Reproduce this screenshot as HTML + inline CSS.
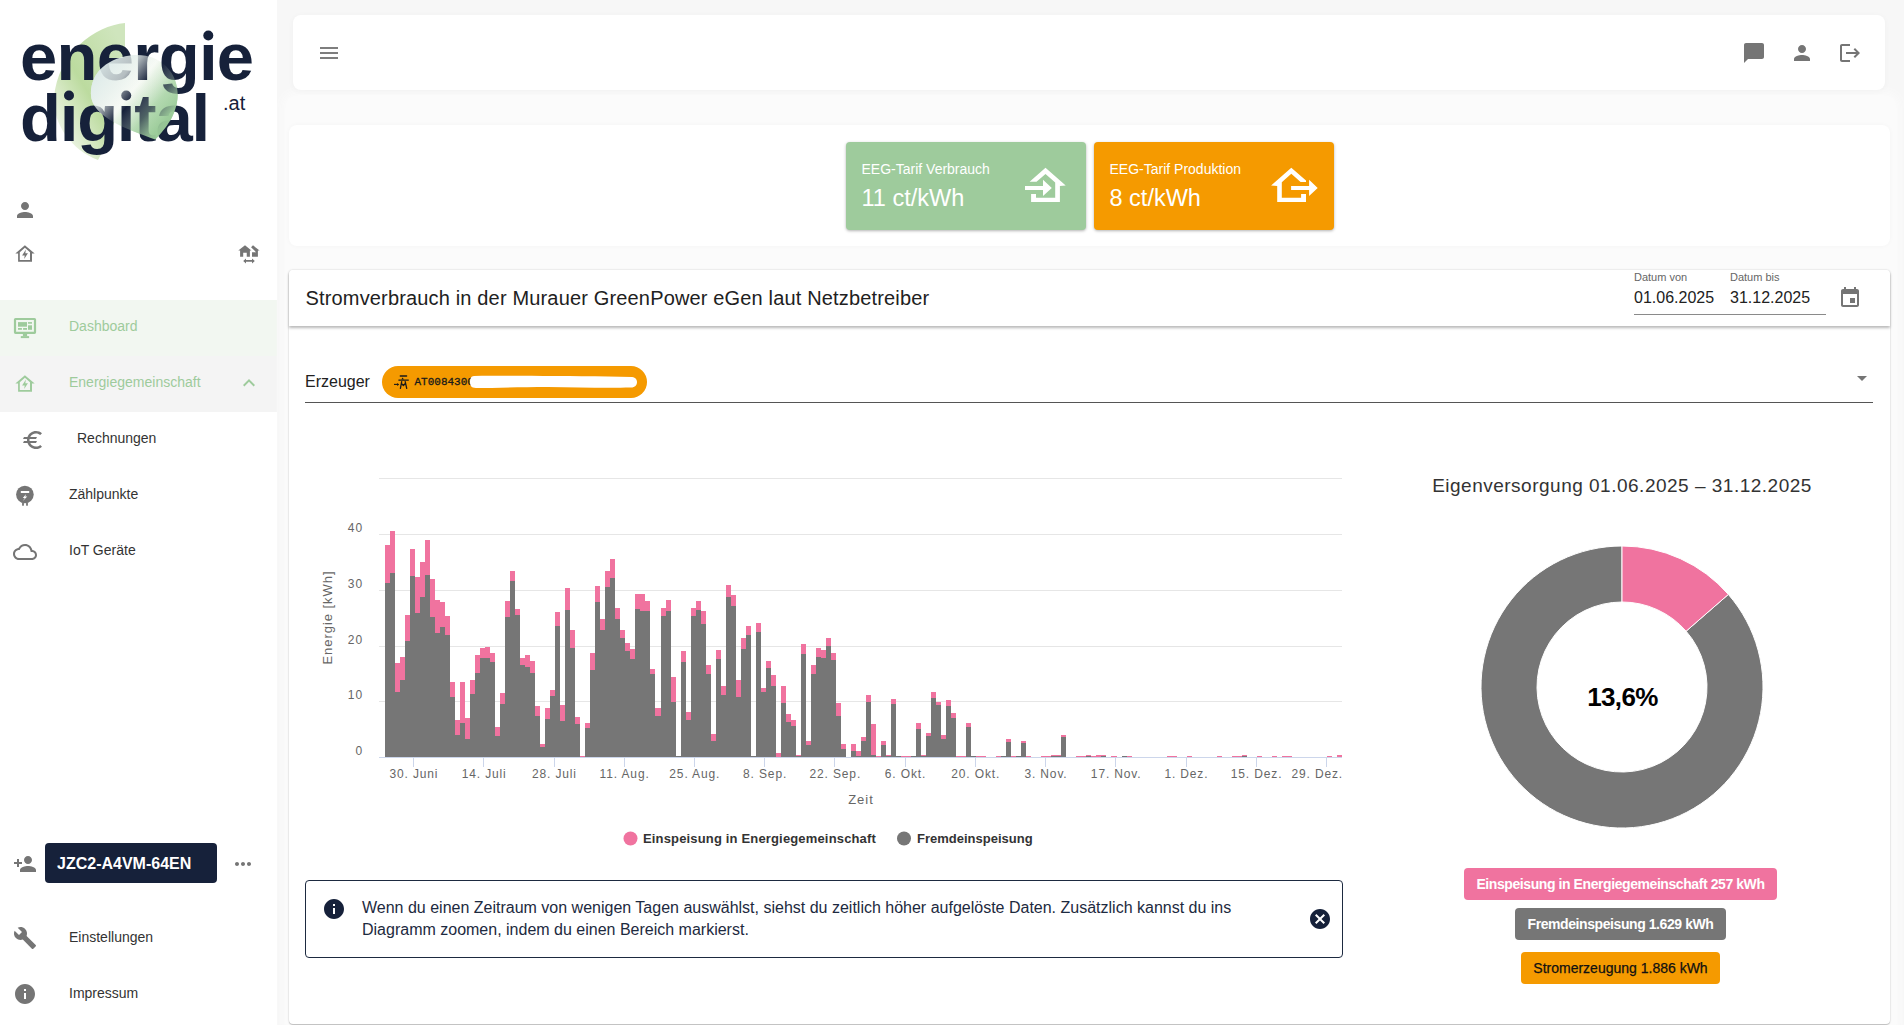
<!DOCTYPE html>
<html><head><meta charset="utf-8">
<style>
*{box-sizing:border-box;margin:0;padding:0}
html,body{width:1904px;height:1025px;overflow:hidden;background:#f7f7f7;font-family:"Liberation Sans",sans-serif;color:#212121}
.abs{position:absolute}
.t{position:absolute;white-space:nowrap;line-height:1}
#side{position:absolute;left:0;top:0;width:277px;height:1025px;background:#fff}
svg.i{position:absolute;fill:#757575}
.nt{position:absolute;font-size:14px;color:#333;white-space:nowrap;line-height:1}
#topbar{position:absolute;left:293px;top:15px;width:1592px;height:75px;background:#fff;border-radius:8px;box-shadow:0 1px 6px rgba(0,0,0,.035)}
#tarif{position:absolute;left:289px;top:125px;width:1601px;height:121px;background:#fff;border-radius:8px;box-shadow:0 0 5px rgba(0,0,0,.03)}
.tcard{position:absolute;top:142px;width:240px;height:88px;border-radius:4px;color:#fff;box-shadow:0 1px 3px rgba(0,0,0,.3)}
#card{position:absolute;left:289px;top:270px;width:1601px;height:754px;background:#fff;border-radius:4px;box-shadow:0 0 2px rgba(0,0,0,.18),0 1px 1px rgba(0,0,0,.2)}
#hdr{position:absolute;left:289px;top:270px;width:1601px;height:56px;background:#fff;border-radius:4px 4px 0 0;box-shadow:0 2px 3px rgba(0,0,0,.28)}
.badge{position:absolute;height:32px;border-radius:4px;font-size:14px;font-weight:bold;letter-spacing:-0.42px;color:#fff;white-space:nowrap;line-height:32px;text-align:center}
</style></head><body>
<div id="side">
  <svg class="abs" style="left:0;top:0" width="277" height="170">
    <defs>
      <linearGradient id="lg1" x1="0.2" y1="0.9" x2="0.9" y2="0.1"><stop offset="0" stop-color="#eef5e6"/><stop offset="0.45" stop-color="#bcdb9f"/><stop offset="1" stop-color="#cfe5bd"/></linearGradient>
      <linearGradient id="lg2a" x1="0" y1="0.1" x2="1" y2="0.9"><stop offset="0" stop-color="#d9e8e8"/><stop offset="0.45" stop-color="#f7faf5"/><stop offset="0.7" stop-color="#b3d9b0"/><stop offset="1" stop-color="#97c995"/></linearGradient>
      <linearGradient id="lg2b" x1="0" y1="0.1" x2="1" y2="0.9"><stop offset="0" stop-color="#d9e8e8" stop-opacity="1"/><stop offset="0.3" stop-color="#eaf2ee" stop-opacity="0.75"/><stop offset="0.5" stop-color="#f7faf5" stop-opacity="0"/><stop offset="0.68" stop-color="#b3d9b0" stop-opacity="0.35"/><stop offset="0.85" stop-color="#9ccc9a" stop-opacity="0.95"/><stop offset="1" stop-color="#97c995" stop-opacity="1"/></linearGradient>
    </defs>
    <path d="M125 23 C 95 26 58 52 54 98 C 53 125 72 150 98 160 C 110 140 118 110 125 85 Z" fill="url(#lg1)"/>
    <path d="M90.9 93.8 C 91 72 108 57 135 55 C 160 54 178 72 177.7 95 C 177 115 166 128 155.2 139.6 C 130 130 91 118 90.9 93.8 Z" fill="url(#lg2a)"/>
    <g fill="#16213a" font-family="Liberation Sans" font-weight="bold" font-size="67">
    <text x="20" y="80" letter-spacing="-0.7">energıe</text>
    <text x="20" y="140.5" letter-spacing="-1.2">dıgıtal</text>
    <circle cx="208.3" cy="35.5" r="5"/><circle cx="69.0" cy="95.5" r="5"/><circle cx="126.2" cy="95.5" r="5"/>
    </g>
    <path d="M90.9 93.8 C 91 72 108 57 135 55 C 160 54 178 72 177.7 95 C 177 115 166 128 155.2 139.6 C 130 130 91 118 90.9 93.8 Z" fill="url(#lg2b)"/>
    <text x="223" y="109.5" font-family="Liberation Sans" font-size="20" fill="#16213a">.at</text>
  </svg>
  <!-- person -->
  <svg class="i" style="left:13px;top:198px" width="24" height="24" viewBox="0 0 24 24"><path d="M12 12c2.21 0 4-1.79 4-4s-1.79-4-4-4-4 1.79-4 4 1.79 4 4 4zm0 2c-2.67 0-8 1.34-8 4v2h16v-2c0-2.66-5.33-4-8-4z"/></svg>
  <!-- home bolt outline -->
  <svg class="abs" style="left:13px;top:241px" width="24" height="24" viewBox="0 0 24 24"><path d="M2.35 12.6 L11.9 4.2 L21.7 12.6 H19 V20.8 H5.1 V12.6 Z M6.8 11.2 V19 H17 V11.2 L11.9 6.7 Z" fill="#757575" fill-rule="evenodd"/><path d="M12.9 8.6 L9.1 14.4 H11.7 L11.2 18 L14.9 12.2 H12.3 Z" fill="#757575"/></svg>
  <!-- swap homes -->
  <svg class="i" style="left:237px;top:243px" width="24" height="24" viewBox="0 0 24 24"><path d="M8 2.2 L1.3 7.6 H3.1 V13.7 H6.2 V9.8 H9.75 V13.7 H12.9 V7.6 H14.4 Z"/><path d="M14.05 4.3 L16 2.35 L22.6 7.6 H20.9 V13.7 H15 V9.2 H19.1 Z"/><path d="M6.2 17.9 L9 15.4 V17.1 H15 V15.4 L17.8 17.9 L15 20.4 V18.7 H9 V20.4 Z"/></svg>
  <!-- Dashboard row -->
  <div class="abs" style="left:0;top:300px;width:277px;height:56px;background:#f2f7f1"></div>
  <div class="abs" style="left:0;top:356px;width:277px;height:56px;background:#f4f4f4"></div>
  <svg class="abs" style="left:13px;top:316px" width="24" height="24" viewBox="0 0 24 24" fill="#9ecb9c"><path fill-rule="evenodd" d="M2.5 1.9 H21.5 Q23.1 1.9 23.1 3.5 V16.3 Q23.1 17.9 21.5 17.9 H2.5 Q0.9 17.9 0.9 16.3 V3.5 Q0.9 1.9 2.5 1.9 Z M3.1 4.1 V15.7 H20.9 V4.1 Z"/><rect x="5" y="6.1" width="9" height="4.6"/><rect x="15" y="6.1" width="4" height="1.6"/><rect x="15" y="9.3" width="4" height="4.5"/><rect x="5" y="12" width="3.9" height="1.8"/><rect x="10.1" y="12" width="3.9" height="1.8"/><rect x="9.9" y="17.5" width="4.2" height="2.8"/><rect x="7.8" y="20.1" width="8.3" height="2"/></svg>
  <div class="nt" style="left:69px;top:319px;color:#9ecb9c">Dashboard</div>
  <svg class="abs" style="left:13px;top:371px" width="24" height="24" viewBox="0 0 24 24"><path d="M2.35 12.6 L11.9 4.2 L21.7 12.6 H19 V20.8 H5.1 V12.6 Z M6.8 11.2 V19 H17 V11.2 L11.9 6.7 Z" fill="#9ecb9c" fill-rule="evenodd"/><path d="M12.9 8.6 L9.1 14.4 H11.7 L11.2 18 L14.9 12.2 H12.3 Z" fill="#9ecb9c"/></svg>
  <div class="nt" style="left:69px;top:375px;color:#9ecb9c">Energiegemeinschaft</div>
  <svg class="abs" style="left:237px;top:371px" width="24" height="24" viewBox="0 0 24 24"><path d="M12 8l-6 6 1.41 1.41L12 10.83l4.59 4.58L18 14z" fill="#9ecb9c"/></svg>
  <svg class="i" style="left:21px;top:428px" width="24" height="24" viewBox="0 0 24 24"><path d="M15 18.5c-2.51 0-4.68-1.42-5.76-3.5H15l1-2H8.58c-.05-.33-.08-.66-.08-1s.03-.67.08-1H15l1-2H9.24C10.32 6.92 12.5 5.5 15 5.5c1.61 0 3.09.59 4.23 1.57L21 5.3C19.41 3.87 17.3 3 15 3c-3.92 0-7.24 2.51-8.48 6H3l-1 2h4.06c-.04.33-.06.66-.06 1s.02.67.06 1H3l-1 2h4.52c1.24 3.49 4.56 6 8.48 6 2.31 0 4.41-.87 6-2.3l-1.78-1.77c-1.13.98-2.6 1.57-4.22 1.57z"/></svg>
  <div class="nt" style="left:77px;top:431px">Rechnungen</div>
  <svg class="abs" style="left:13px;top:484px" width="24" height="24" viewBox="0 0 24 24"><circle cx="11.9" cy="10.5" r="8.8" fill="#757575"/><rect x="7.8" y="7" width="8.4" height="2" fill="#fff"/><path d="M13.2 10 L9.8 14 H11.8 L9.8 17 L14.3 12.6 H12.2 Z" fill="#fff"/><rect x="9.1" y="18.5" width="1.8" height="3.2" fill="#757575"/><rect x="13.1" y="18.5" width="1.8" height="3.2" fill="#757575"/></svg>
  <div class="nt" style="left:69px;top:487px">Zählpunkte</div>
  <svg class="i" style="left:13px;top:540px" width="24" height="24" viewBox="0 0 24 24"><path d="M19.35 10.04C18.67 6.59 15.64 4 12 4 9.11 4 6.6 5.64 5.35 8.04 2.34 8.36 0 10.91 0 14c0 3.31 2.69 6 6 6h13c2.76 0 5-2.24 5-5 0-2.64-2.05-4.78-4.65-4.96zM19 18H6c-2.21 0-4-1.79-4-4 0-2.05 1.53-3.76 3.56-3.97l1.07-.11.5-.95C8.08 7.14 9.94 6 12 6c2.62 0 4.88 1.86 5.39 4.43l.3 1.5 1.53.11c1.56.1 2.78 1.41 2.78 2.96 0 1.65-1.35 3-3 3z"/></svg>
  <div class="nt" style="left:69px;top:543px">IoT Geräte</div>
  <!-- bottom -->
  <svg class="i" style="left:13px;top:852px" width="24" height="24" viewBox="0 0 24 24"><path d="M15 12c2.21 0 4-1.79 4-4s-1.79-4-4-4-4 1.79-4 4 1.79 4 4 4zm-9-2V7H4v3H1v2h3v3h2v-3h3v-2H6zm9 4c-2.67 0-8 1.34-8 4v2h16v-2c0-2.66-5.33-4-8-4z"/></svg>
  <div class="abs" style="left:45px;top:843px;width:172px;height:40px;background:#16213a;border-radius:4px"></div>
  <div class="t" style="left:57px;top:856px;font-size:16px;font-weight:bold;color:#fff">JZC2-A4VM-64EN</div>
  <svg class="i" style="left:231px;top:852px" width="24" height="24" viewBox="0 0 24 24"><path d="M6 10c-1.1 0-2 .9-2 2s.9 2 2 2 2-.9 2-2-.9-2-2-2zm12 0c-1.1 0-2 .9-2 2s.9 2 2 2 2-.9 2-2-.9-2-2-2zm-6 0c-1.1 0-2 .9-2 2s.9 2 2 2 2-.9 2-2-.9-2-2-2z"/></svg>
  <svg class="i" style="left:12.5px;top:925.5px" width="24" height="24" viewBox="0 0 24 24"><path d="M22.7 19l-9.1-9.1c.9-2.3.4-5-1.5-6.9-2-2-5-2.4-7.4-1.3L9 6 6 9 1.6 4.7C.4 7.1.9 10.1 2.9 12.1c1.9 1.9 4.6 2.4 6.9 1.5l9.1 9.1c.4.4 1 .4 1.4 0l2.3-2.3c.5-.4.5-1.1.1-1.4z"/></svg>
  <div class="nt" style="left:69px;top:930px">Einstellungen</div>
  <svg class="i" style="left:13px;top:982px" width="24" height="24" viewBox="0 0 24 24"><path d="M12 2C6.48 2 2 6.48 2 12s4.48 10 10 10 10-4.48 10-10S17.52 2 12 2zm1 15h-2v-6h2v6zm0-8h-2V7h2v2z"/></svg>
  <div class="nt" style="left:69px;top:986px">Impressum</div>
</div>

<div class="abs" style="left:286px;top:96px;width:1610px;height:940px;background:#fbfbfb;border-radius:10px;box-shadow:0 0 8px 4px #fbfbfb"></div>
<div id="topbar"></div>
<svg class="abs" style="left:317px;top:41px" width="24" height="24" viewBox="0 0 24 24" fill="#5f5f5f"><rect x="3" y="6.2" width="18" height="1.6"/><rect x="3" y="11.2" width="18" height="1.6"/><rect x="3" y="16.2" width="18" height="1.6"/></svg>
<svg class="i" style="left:1742px;top:41px" width="24" height="24" viewBox="0 0 24 24"><path d="M20 2H4c-1.1 0-2 .9-2 2v18l4-4h14c1.1 0 2-.9 2-2V4c0-1.1-.9-2-2-2z"/></svg>
<svg class="i" style="left:1790px;top:41px" width="24" height="24" viewBox="0 0 24 24"><path d="M12 12c2.21 0 4-1.79 4-4s-1.79-4-4-4-4 1.79-4 4 1.79 4 4 4zm0 2c-2.67 0-8 1.34-8 4v2h16v-2c0-2.66-5.33-4-8-4z"/></svg>
<svg class="i" style="left:1838px;top:41px" width="24" height="24" viewBox="0 0 24 24"><path d="M17 7l-1.41 1.41L18.17 11H8v2h10.17l-2.58 2.58L17 17l5-5zM4 5h8V3H4c-1.1 0-2 .9-2 2v14c0 1.1.9 2 2 2h8v-2H4V5z"/></svg>

<div id="tarif"></div>
<div class="tcard" style="left:846px;background:#9ecb9c">
  <div class="t" style="left:15.5px;top:20px;font-size:14px">EEG-Tarif Verbrauch</div>
  <div class="t" style="left:15.5px;top:45px;font-size:23.5px">11 ct/kWh</div>
  <svg class="abs" style="left:0;top:0" width="239" height="88" viewBox="0 0 239 88"><path fill="#fff" d="M183.6 39.7 L199.5 25.8 L219.7 43.6 L213.9 44.1 V60 H185.1 V51.9 H190 V55.8 H209.2 V40.4 L199.5 31.9 L190.5 39.7 Z"/><path fill="#fff" d="M179 44.1 H197 V37.8 L205.8 45.9 L197 54.1 V48 H179 Z"/></svg>
</div>
<div class="tcard" style="left:1094px;background:#f59a00">
  <div class="t" style="left:15.5px;top:20px;font-size:14px">EEG-Tarif Produktion</div>
  <div class="t" style="left:15.5px;top:45px;font-size:23.5px">8 ct/kWh</div>
  <svg class="abs" style="left:0;top:0" width="239" height="88" viewBox="0 0 239 88"><path fill="#fff" d="M177.1 43.4 L197.3 25.8 L212 38.5 V40 H206.6 L197.3 31.7 L187.8 40.2 V55.8 H207.1 V51.9 H212 V60 H183.2 V44.1 Z"/><path fill="#fff" d="M197.1 44.1 H215.1 V37.8 L223.7 45.9 L215.1 54.1 V48 H197.1 Z"/></svg>
</div>

<div id="card"></div>
<div id="hdr">
  <div class="t" style="left:16.5px;top:18px;font-size:20px;color:#212121;letter-spacing:0.16px">Stromverbrauch in der Murauer GreenPower eGen laut Netzbetreiber</div>
  <div class="t" style="left:1345px;top:2px;font-size:11px;color:#666">Datum von</div>
  <div class="t" style="left:1441px;top:2px;font-size:11px;color:#666">Datum bis</div>
  <div class="t" style="left:1345px;top:20px;font-size:16px;color:#212121">01.06.2025</div>
  <div class="t" style="left:1441px;top:20px;font-size:16px;color:#212121">31.12.2025</div>
  <div class="abs" style="left:1345px;top:44px;width:192px;height:1px;background:#8a8a8a"></div>
  <svg class="i" style="left:1549px;top:16px" width="24" height="24" viewBox="0 0 24 24"><path d="M17 12h-5v5h5v-5zM16 1v2H8V1H6v2H5c-1.11 0-1.99.9-1.99 2L3 19c0 1.1.89 2 2 2h14c1.1 0 2-.9 2-2V5c0-1.1-.9-2-2-2h-1V1h-2zm3 18H5V8h14v11z"/></svg>
</div>

<!-- Erzeuger select -->
<div class="t" style="left:305px;top:374px;font-size:16px;color:#212121">Erzeuger</div>
<div class="abs" style="left:382px;top:366px;width:265px;height:32px;border-radius:16px;background:#f59a00"></div>
<svg class="abs" style="left:393px;top:374px" width="17" height="16" viewBox="0 0 17 16"><path d="M7.3 2 H13.6 M5.9 6.1 H15.3" stroke="#1a1a1a" stroke-width="1.4" stroke-linecap="round" fill="none"/><path d="M9.6 3.5 L10.9 5.5 H8.3 Z" fill="#1a1a1a"/><path d="M8.7 7.6 L7.4 14.3 M12.2 7.6 L13.7 14.3 M8.4 9.5 L10.4 11.5 M12.3 9.5 L10.4 11.5" stroke="#1a1a1a" stroke-width="1.3" stroke-linecap="round" fill="none"/><path d="M1 10.4 H5" stroke="#1a1a1a" stroke-width="1.1"/><path d="M4.2 8.9 L6.2 10.4 L4.2 11.9 Z" fill="#1a1a1a"/></svg>
<div class="t" style="left:414.5px;top:377px;font-family:'Liberation Mono',monospace;font-size:11px;-webkit-text-stroke:0.3px #1a1a1a;color:#1a1a1a">AT0084300</div>
<svg class="abs" style="left:468px;top:372px" width="172" height="20" viewBox="0 0 172 20"><path d="M6 4 C 40 3.5 90 4 140 4.5 L164 5 C 168 5.5 169 8 169 10 C 169 13 167 15.5 163 15.5 C 140 16 110 15.5 80 15 C 50 15 25 16 8 16 C 3 16 2 13 2 10 C 2 7 3 4 6 4 Z" fill="#fff"/></svg>
<div class="abs" style="left:305px;top:402px;width:1568px;height:1px;background:#555"></div>
<svg class="i" style="left:1850px;top:366px" width="24" height="24" viewBox="0 0 24 24"><path d="M7 10l5 5 5-5z"/></svg>

<svg class="abs" style="left:0;top:0" width="1904" height="1025" font-family="Liberation Sans">
<path d="M379 757.5 H1342" stroke="#e6e6e6" stroke-width="1"/>
<path d="M379 701.5 H1342" stroke="#e6e6e6" stroke-width="1"/>
<path d="M379 646.5 H1342" stroke="#e6e6e6" stroke-width="1"/>
<path d="M379 590.5 H1342" stroke="#e6e6e6" stroke-width="1"/>
<path d="M379 534.5 H1342" stroke="#e6e6e6" stroke-width="1"/>
<path d="M379 478.5 H1342" stroke="#e6e6e6" stroke-width="1"/>
<rect x="385" y="583" width="5" height="174" fill="#767676"/>
<rect x="385" y="545" width="5" height="38" fill="#f0739f"/>
<rect x="390" y="573" width="5" height="184" fill="#767676"/>
<rect x="390" y="531" width="5" height="42" fill="#f0739f"/>
<rect x="395" y="692" width="5" height="65" fill="#767676"/>
<rect x="395" y="663" width="5" height="29" fill="#f0739f"/>
<rect x="400" y="680" width="5" height="77" fill="#767676"/>
<rect x="400" y="657" width="5" height="23" fill="#f0739f"/>
<rect x="405" y="641" width="5" height="116" fill="#767676"/>
<rect x="405" y="615" width="5" height="26" fill="#f0739f"/>
<rect x="410" y="576" width="5" height="181" fill="#767676"/>
<rect x="410" y="549" width="5" height="27" fill="#f0739f"/>
<rect x="415" y="613" width="5" height="144" fill="#767676"/>
<rect x="415" y="577" width="5" height="36" fill="#f0739f"/>
<rect x="420" y="597" width="5" height="160" fill="#767676"/>
<rect x="420" y="562" width="5" height="35" fill="#f0739f"/>
<rect x="425" y="575" width="5" height="182" fill="#767676"/>
<rect x="425" y="540" width="5" height="35" fill="#f0739f"/>
<rect x="430" y="617" width="5" height="140" fill="#767676"/>
<rect x="430" y="579" width="5" height="38" fill="#f0739f"/>
<rect x="435" y="633" width="5" height="124" fill="#767676"/>
<rect x="435" y="600" width="5" height="33" fill="#f0739f"/>
<rect x="440" y="627" width="5" height="130" fill="#767676"/>
<rect x="440" y="602" width="5" height="25" fill="#f0739f"/>
<rect x="445" y="635" width="5" height="122" fill="#767676"/>
<rect x="445" y="616" width="5" height="19" fill="#f0739f"/>
<rect x="450" y="697" width="5" height="60" fill="#767676"/>
<rect x="450" y="682" width="5" height="15" fill="#f0739f"/>
<rect x="455" y="735" width="5" height="22" fill="#767676"/>
<rect x="455" y="720" width="5" height="15" fill="#f0739f"/>
<rect x="460" y="723" width="5" height="34" fill="#767676"/>
<rect x="460" y="682" width="5" height="41" fill="#f0739f"/>
<rect x="465" y="739" width="5" height="18" fill="#767676"/>
<rect x="465" y="718" width="5" height="21" fill="#f0739f"/>
<rect x="470" y="694" width="5" height="63" fill="#767676"/>
<rect x="470" y="680" width="5" height="14" fill="#f0739f"/>
<rect x="475" y="673" width="5" height="84" fill="#767676"/>
<rect x="475" y="655" width="5" height="18" fill="#f0739f"/>
<rect x="480" y="658" width="5" height="99" fill="#767676"/>
<rect x="480" y="648" width="5" height="10" fill="#f0739f"/>
<rect x="485" y="658" width="5" height="99" fill="#767676"/>
<rect x="485" y="647" width="5" height="11" fill="#f0739f"/>
<rect x="490" y="662" width="5" height="95" fill="#767676"/>
<rect x="490" y="653" width="5" height="9" fill="#f0739f"/>
<rect x="495" y="736" width="5" height="21" fill="#767676"/>
<rect x="495" y="727" width="5" height="9" fill="#f0739f"/>
<rect x="500" y="704" width="5" height="53" fill="#767676"/>
<rect x="500" y="693" width="5" height="11" fill="#f0739f"/>
<rect x="505" y="617" width="5" height="140" fill="#767676"/>
<rect x="505" y="601" width="5" height="16" fill="#f0739f"/>
<rect x="510" y="581" width="5" height="176" fill="#767676"/>
<rect x="510" y="571" width="5" height="10" fill="#f0739f"/>
<rect x="515" y="615" width="5" height="142" fill="#767676"/>
<rect x="515" y="609" width="5" height="6" fill="#f0739f"/>
<rect x="520" y="665" width="5" height="92" fill="#767676"/>
<rect x="520" y="658" width="5" height="7" fill="#f0739f"/>
<rect x="525" y="667" width="5" height="90" fill="#767676"/>
<rect x="525" y="655" width="5" height="12" fill="#f0739f"/>
<rect x="530" y="673" width="5" height="84" fill="#767676"/>
<rect x="530" y="661" width="5" height="12" fill="#f0739f"/>
<rect x="535" y="716" width="5" height="41" fill="#767676"/>
<rect x="535" y="706" width="5" height="10" fill="#f0739f"/>
<rect x="540" y="747" width="5" height="10" fill="#767676"/>
<rect x="540" y="744" width="5" height="3" fill="#f0739f"/>
<rect x="545" y="719" width="5" height="38" fill="#767676"/>
<rect x="545" y="708" width="5" height="11" fill="#f0739f"/>
<rect x="550" y="696" width="5" height="61" fill="#767676"/>
<rect x="550" y="690" width="5" height="6" fill="#f0739f"/>
<rect x="555" y="626" width="5" height="131" fill="#767676"/>
<rect x="555" y="612" width="5" height="14" fill="#f0739f"/>
<rect x="560" y="721" width="5" height="36" fill="#767676"/>
<rect x="560" y="705" width="5" height="16" fill="#f0739f"/>
<rect x="565" y="610" width="5" height="147" fill="#767676"/>
<rect x="565" y="588" width="5" height="22" fill="#f0739f"/>
<rect x="570" y="648" width="5" height="109" fill="#767676"/>
<rect x="570" y="630" width="5" height="18" fill="#f0739f"/>
<rect x="575" y="724" width="5" height="33" fill="#767676"/>
<rect x="575" y="717" width="5" height="7" fill="#f0739f"/>
<rect x="580" y="756" width="5" height="1" fill="#f0739f"/>
<rect x="585" y="728" width="5" height="29" fill="#767676"/>
<rect x="585" y="723" width="5" height="5" fill="#f0739f"/>
<rect x="590" y="670" width="5" height="87" fill="#767676"/>
<rect x="590" y="653" width="5" height="17" fill="#f0739f"/>
<rect x="595" y="602" width="5" height="155" fill="#767676"/>
<rect x="595" y="586" width="5" height="16" fill="#f0739f"/>
<rect x="600" y="630" width="5" height="127" fill="#767676"/>
<rect x="600" y="619" width="5" height="11" fill="#f0739f"/>
<rect x="605" y="587" width="5" height="170" fill="#767676"/>
<rect x="605" y="571" width="5" height="16" fill="#f0739f"/>
<rect x="610" y="578" width="5" height="179" fill="#767676"/>
<rect x="610" y="559" width="5" height="19" fill="#f0739f"/>
<rect x="615" y="619" width="5" height="138" fill="#767676"/>
<rect x="615" y="608" width="5" height="11" fill="#f0739f"/>
<rect x="620" y="638" width="5" height="119" fill="#767676"/>
<rect x="620" y="630" width="5" height="8" fill="#f0739f"/>
<rect x="625" y="651" width="5" height="106" fill="#767676"/>
<rect x="625" y="643" width="5" height="8" fill="#f0739f"/>
<rect x="630" y="659" width="5" height="98" fill="#767676"/>
<rect x="630" y="649" width="5" height="10" fill="#f0739f"/>
<rect x="635" y="609" width="5" height="148" fill="#767676"/>
<rect x="635" y="594" width="5" height="15" fill="#f0739f"/>
<rect x="640" y="611" width="5" height="146" fill="#767676"/>
<rect x="640" y="594" width="5" height="17" fill="#f0739f"/>
<rect x="645" y="611" width="5" height="146" fill="#767676"/>
<rect x="645" y="601" width="5" height="10" fill="#f0739f"/>
<rect x="650" y="674" width="5" height="83" fill="#767676"/>
<rect x="650" y="669" width="5" height="5" fill="#f0739f"/>
<rect x="655" y="716" width="6" height="41" fill="#767676"/>
<rect x="655" y="708" width="6" height="8" fill="#f0739f"/>
<rect x="661" y="616" width="5" height="141" fill="#767676"/>
<rect x="661" y="608" width="5" height="8" fill="#f0739f"/>
<rect x="666" y="611" width="5" height="146" fill="#767676"/>
<rect x="666" y="600" width="5" height="11" fill="#f0739f"/>
<rect x="671" y="702" width="5" height="55" fill="#767676"/>
<rect x="671" y="677" width="5" height="25" fill="#f0739f"/>
<rect x="676" y="756" width="5" height="1" fill="#767676"/>
<rect x="681" y="662" width="5" height="95" fill="#767676"/>
<rect x="681" y="651" width="5" height="11" fill="#f0739f"/>
<rect x="686" y="720" width="5" height="37" fill="#767676"/>
<rect x="686" y="712" width="5" height="8" fill="#f0739f"/>
<rect x="691" y="616" width="5" height="141" fill="#767676"/>
<rect x="691" y="608" width="5" height="8" fill="#f0739f"/>
<rect x="696" y="610" width="5" height="147" fill="#767676"/>
<rect x="696" y="601" width="5" height="9" fill="#f0739f"/>
<rect x="701" y="624" width="5" height="133" fill="#767676"/>
<rect x="701" y="611" width="5" height="13" fill="#f0739f"/>
<rect x="706" y="674" width="5" height="83" fill="#767676"/>
<rect x="706" y="665" width="5" height="9" fill="#f0739f"/>
<rect x="711" y="741" width="5" height="16" fill="#767676"/>
<rect x="711" y="734" width="5" height="7" fill="#f0739f"/>
<rect x="716" y="659" width="5" height="98" fill="#767676"/>
<rect x="716" y="650" width="5" height="9" fill="#f0739f"/>
<rect x="721" y="695" width="5" height="62" fill="#767676"/>
<rect x="721" y="686" width="5" height="9" fill="#f0739f"/>
<rect x="726" y="597" width="5" height="160" fill="#767676"/>
<rect x="726" y="585" width="5" height="12" fill="#f0739f"/>
<rect x="731" y="606" width="5" height="151" fill="#767676"/>
<rect x="731" y="595" width="5" height="11" fill="#f0739f"/>
<rect x="736" y="697" width="5" height="60" fill="#767676"/>
<rect x="736" y="680" width="5" height="17" fill="#f0739f"/>
<rect x="741" y="649" width="5" height="108" fill="#767676"/>
<rect x="741" y="638" width="5" height="11" fill="#f0739f"/>
<rect x="746" y="635" width="5" height="122" fill="#767676"/>
<rect x="746" y="626" width="5" height="9" fill="#f0739f"/>
<rect x="751" y="756" width="5" height="1" fill="#767676"/>
<rect x="756" y="632" width="5" height="125" fill="#767676"/>
<rect x="756" y="623" width="5" height="9" fill="#f0739f"/>
<rect x="761" y="692" width="5" height="65" fill="#767676"/>
<rect x="761" y="688" width="5" height="4" fill="#f0739f"/>
<rect x="766" y="668" width="5" height="89" fill="#767676"/>
<rect x="766" y="661" width="5" height="7" fill="#f0739f"/>
<rect x="771" y="686" width="5" height="71" fill="#767676"/>
<rect x="771" y="675" width="5" height="11" fill="#f0739f"/>
<rect x="776" y="753" width="5" height="4" fill="#f0739f"/>
<rect x="781" y="703" width="5" height="54" fill="#767676"/>
<rect x="781" y="686" width="5" height="17" fill="#f0739f"/>
<rect x="786" y="722" width="5" height="35" fill="#767676"/>
<rect x="786" y="714" width="5" height="8" fill="#f0739f"/>
<rect x="791" y="726" width="5" height="31" fill="#767676"/>
<rect x="791" y="720" width="5" height="6" fill="#f0739f"/>
<rect x="796" y="756" width="5" height="1" fill="#767676"/>
<rect x="796" y="755" width="5" height="1" fill="#f0739f"/>
<rect x="801" y="654" width="5" height="103" fill="#767676"/>
<rect x="801" y="644" width="5" height="10" fill="#f0739f"/>
<rect x="806" y="745" width="5" height="12" fill="#767676"/>
<rect x="806" y="741" width="5" height="4" fill="#f0739f"/>
<rect x="811" y="674" width="5" height="83" fill="#767676"/>
<rect x="811" y="665" width="5" height="9" fill="#f0739f"/>
<rect x="816" y="657" width="5" height="100" fill="#767676"/>
<rect x="816" y="648" width="5" height="9" fill="#f0739f"/>
<rect x="821" y="658" width="5" height="99" fill="#767676"/>
<rect x="821" y="650" width="5" height="8" fill="#f0739f"/>
<rect x="826" y="646" width="5" height="111" fill="#767676"/>
<rect x="826" y="638" width="5" height="8" fill="#f0739f"/>
<rect x="831" y="660" width="5" height="97" fill="#767676"/>
<rect x="831" y="653" width="5" height="7" fill="#f0739f"/>
<rect x="836" y="716" width="5" height="41" fill="#767676"/>
<rect x="836" y="703" width="5" height="13" fill="#f0739f"/>
<rect x="841" y="749" width="5" height="8" fill="#767676"/>
<rect x="841" y="744" width="5" height="5" fill="#f0739f"/>
<rect x="851" y="751" width="5" height="6" fill="#767676"/>
<rect x="851" y="744" width="5" height="7" fill="#f0739f"/>
<rect x="856" y="756" width="5" height="1" fill="#767676"/>
<rect x="856" y="751" width="5" height="5" fill="#f0739f"/>
<rect x="861" y="741" width="5" height="16" fill="#767676"/>
<rect x="861" y="737" width="5" height="4" fill="#f0739f"/>
<rect x="866" y="702" width="5" height="55" fill="#767676"/>
<rect x="866" y="695" width="5" height="7" fill="#f0739f"/>
<rect x="871" y="755" width="5" height="2" fill="#767676"/>
<rect x="871" y="724" width="5" height="31" fill="#f0739f"/>
<rect x="876" y="756" width="5" height="1" fill="#f0739f"/>
<rect x="881" y="745" width="5" height="12" fill="#767676"/>
<rect x="881" y="741" width="5" height="4" fill="#f0739f"/>
<rect x="886" y="756" width="5" height="1" fill="#767676"/>
<rect x="886" y="755" width="5" height="1" fill="#f0739f"/>
<rect x="891" y="704" width="5" height="53" fill="#767676"/>
<rect x="891" y="699" width="5" height="5" fill="#f0739f"/>
<rect x="896" y="756" width="5" height="1" fill="#767676"/>
<rect x="901" y="756" width="5" height="1" fill="#f0739f"/>
<rect x="906" y="756" width="5" height="1" fill="#f0739f"/>
<rect x="911" y="756" width="5" height="1" fill="#767676"/>
<rect x="916" y="729" width="5" height="28" fill="#767676"/>
<rect x="916" y="723" width="5" height="6" fill="#f0739f"/>
<rect x="921" y="756" width="5" height="1" fill="#767676"/>
<rect x="921" y="755" width="5" height="1" fill="#f0739f"/>
<rect x="926" y="736" width="5" height="21" fill="#767676"/>
<rect x="926" y="733" width="5" height="3" fill="#f0739f"/>
<rect x="931" y="698" width="5" height="59" fill="#767676"/>
<rect x="931" y="692" width="5" height="6" fill="#f0739f"/>
<rect x="936" y="705" width="5" height="52" fill="#767676"/>
<rect x="936" y="702" width="5" height="3" fill="#f0739f"/>
<rect x="941" y="739" width="5" height="18" fill="#767676"/>
<rect x="941" y="735" width="5" height="4" fill="#f0739f"/>
<rect x="946" y="706" width="5" height="51" fill="#767676"/>
<rect x="946" y="700" width="5" height="6" fill="#f0739f"/>
<rect x="951" y="718" width="5" height="39" fill="#767676"/>
<rect x="951" y="713" width="5" height="5" fill="#f0739f"/>
<rect x="956" y="756" width="5" height="1" fill="#f0739f"/>
<rect x="961" y="756" width="5" height="1" fill="#f0739f"/>
<rect x="966" y="727" width="5" height="30" fill="#767676"/>
<rect x="966" y="723" width="5" height="4" fill="#f0739f"/>
<rect x="971" y="756" width="5" height="1" fill="#767676"/>
<rect x="976" y="756" width="5" height="1" fill="#f0739f"/>
<rect x="981" y="756" width="5" height="1" fill="#f0739f"/>
<rect x="996" y="756" width="5" height="1" fill="#f0739f"/>
<rect x="1001" y="756" width="5" height="1" fill="#767676"/>
<rect x="1006" y="742" width="5" height="15" fill="#767676"/>
<rect x="1006" y="739" width="5" height="3" fill="#f0739f"/>
<rect x="1011" y="756" width="5" height="1" fill="#f0739f"/>
<rect x="1016" y="756" width="5" height="1" fill="#767676"/>
<rect x="1021" y="743" width="5" height="14" fill="#767676"/>
<rect x="1021" y="741" width="5" height="2" fill="#f0739f"/>
<rect x="1026" y="756" width="5" height="1" fill="#f0739f"/>
<rect x="1041" y="756" width="5" height="1" fill="#f0739f"/>
<rect x="1046" y="756" width="5" height="1" fill="#f0739f"/>
<rect x="1051" y="756" width="5" height="1" fill="#767676"/>
<rect x="1051" y="755" width="5" height="1" fill="#f0739f"/>
<rect x="1056" y="756" width="5" height="1" fill="#767676"/>
<rect x="1056" y="755" width="5" height="1" fill="#f0739f"/>
<rect x="1061" y="737" width="5" height="20" fill="#767676"/>
<rect x="1061" y="735" width="5" height="2" fill="#f0739f"/>
<rect x="1076" y="756" width="5" height="1" fill="#f0739f"/>
<rect x="1081" y="756" width="5" height="1" fill="#f0739f"/>
<rect x="1086" y="756" width="5" height="1" fill="#767676"/>
<rect x="1086" y="755" width="5" height="1" fill="#f0739f"/>
<rect x="1091" y="756" width="5" height="1" fill="#f0739f"/>
<rect x="1096" y="755" width="5" height="2" fill="#f0739f"/>
<rect x="1101" y="756" width="5" height="1" fill="#767676"/>
<rect x="1101" y="755" width="5" height="1" fill="#f0739f"/>
<rect x="1111" y="756" width="6" height="1" fill="#f0739f"/>
<rect x="1122" y="756" width="5" height="1" fill="#767676"/>
<rect x="1127" y="756" width="5" height="1" fill="#f0739f"/>
<rect x="1167" y="756" width="5" height="1" fill="#f0739f"/>
<rect x="1172" y="756" width="5" height="1" fill="#f0739f"/>
<rect x="1187" y="756" width="5" height="1" fill="#f0739f"/>
<rect x="1217" y="756" width="5" height="1" fill="#f0739f"/>
<rect x="1232" y="756" width="5" height="1" fill="#f0739f"/>
<rect x="1237" y="756" width="5" height="1" fill="#f0739f"/>
<rect x="1242" y="756" width="5" height="1" fill="#767676"/>
<rect x="1242" y="755" width="5" height="1" fill="#f0739f"/>
<rect x="1257" y="756" width="5" height="1" fill="#f0739f"/>
<rect x="1272" y="756" width="5" height="1" fill="#f0739f"/>
<rect x="1282" y="756" width="5" height="1" fill="#f0739f"/>
<rect x="1287" y="756" width="5" height="1" fill="#f0739f"/>
<rect x="1327" y="756" width="5" height="1" fill="#f0739f"/>
<rect x="1337" y="755" width="5" height="2" fill="#f0739f"/>
<path d="M379 757.5 H1342" stroke="#ccd6eb" stroke-width="1"/>
<text x="363" y="755.3" text-anchor="end" font-size="12" letter-spacing="0.9" fill="#666">0</text><text x="363" y="699.4" text-anchor="end" font-size="12" letter-spacing="0.9" fill="#666">10</text><text x="363" y="643.5" text-anchor="end" font-size="12" letter-spacing="0.9" fill="#666">20</text><text x="363" y="587.6" text-anchor="end" font-size="12" letter-spacing="0.9" fill="#666">30</text><text x="363" y="531.7" text-anchor="end" font-size="12" letter-spacing="0.9" fill="#666">40</text>
<path d="M413.5 757 V767" stroke="#ccd6eb" stroke-width="1"/><text x="413.9" y="778" text-anchor="middle" font-size="12" letter-spacing="0.86" fill="#666">30. Juni</text><path d="M483.5 757 V767" stroke="#ccd6eb" stroke-width="1"/><text x="484.2" y="778" text-anchor="middle" font-size="12" letter-spacing="0.86" fill="#666">14. Juli</text><path d="M554.5 757 V767" stroke="#ccd6eb" stroke-width="1"/><text x="554.4" y="778" text-anchor="middle" font-size="12" letter-spacing="0.86" fill="#666">28. Juli</text><path d="M624.5 757 V767" stroke="#ccd6eb" stroke-width="1"/><text x="624.6" y="778" text-anchor="middle" font-size="12" letter-spacing="0.86" fill="#666">11. Aug.</text><path d="M694.5 757 V767" stroke="#ccd6eb" stroke-width="1"/><text x="694.8" y="778" text-anchor="middle" font-size="12" letter-spacing="0.86" fill="#666">25. Aug.</text><path d="M764.5 757 V767" stroke="#ccd6eb" stroke-width="1"/><text x="765.1" y="778" text-anchor="middle" font-size="12" letter-spacing="0.86" fill="#666">8. Sep.</text><path d="M834.5 757 V767" stroke="#ccd6eb" stroke-width="1"/><text x="835.3" y="778" text-anchor="middle" font-size="12" letter-spacing="0.86" fill="#666">22. Sep.</text><path d="M905.5 757 V767" stroke="#ccd6eb" stroke-width="1"/><text x="905.5" y="778" text-anchor="middle" font-size="12" letter-spacing="0.86" fill="#666">6. Okt.</text><path d="M975.5 757 V767" stroke="#ccd6eb" stroke-width="1"/><text x="975.7" y="778" text-anchor="middle" font-size="12" letter-spacing="0.86" fill="#666">20. Okt.</text><path d="M1045.5 757 V767" stroke="#ccd6eb" stroke-width="1"/><text x="1046.0" y="778" text-anchor="middle" font-size="12" letter-spacing="0.86" fill="#666">3. Nov.</text><path d="M1115.5 757 V767" stroke="#ccd6eb" stroke-width="1"/><text x="1116.2" y="778" text-anchor="middle" font-size="12" letter-spacing="0.86" fill="#666">17. Nov.</text><path d="M1186.5 757 V767" stroke="#ccd6eb" stroke-width="1"/><text x="1186.4" y="778" text-anchor="middle" font-size="12" letter-spacing="0.86" fill="#666">1. Dez.</text><path d="M1256.5 757 V767" stroke="#ccd6eb" stroke-width="1"/><text x="1256.6" y="778" text-anchor="middle" font-size="12" letter-spacing="0.86" fill="#666">15. Dez.</text><path d="M1326.5 757 V767" stroke="#ccd6eb" stroke-width="1"/><text x="1343" y="778" text-anchor="end" font-size="12" letter-spacing="0.86" fill="#666">29. Dez.</text>
<text x="861" y="804" text-anchor="middle" font-size="13" letter-spacing="1" fill="#666">Zeit</text>
<text transform="translate(332 617.5) rotate(-90)" text-anchor="middle" font-size="13" letter-spacing="0.95" fill="#666">Energie [kWh]</text>
<circle cx="630.5" cy="838.5" r="7" fill="#f0739f"/>
<text x="643" y="843" font-size="13" font-weight="bold" letter-spacing="0.16" fill="#333">Einspeisung in Energiegemeinschaft</text>
<circle cx="904" cy="838.5" r="7" fill="#767676"/>
<text x="917" y="843" font-size="13" font-weight="bold" fill="#333">Fremdeinspeisung</text>
</svg>
<svg class="abs" style="left:0;top:0" width="1904" height="1025" font-family="Liberation Sans">
<text x="1622" y="492" text-anchor="middle" font-size="19" letter-spacing="0.5" fill="#333">Eigenversorgung 01.06.2025 – 31.12.2025</text>
<path d="M1728.35 594.42 A141 141 0 1 1 1622.00 546.00 L1622.00 602.00 A85 85 0 1 0 1686.11 631.19 Z" fill="#767676" stroke="#fff" stroke-width="1"/>
<path d="M1622.00 546.00 A141 141 0 0 1 1728.35 594.42 L1686.11 631.19 A85 85 0 0 0 1622.00 602.00 Z" fill="#f0739f" stroke="#fff" stroke-width="1"/>
<text x="1622.5" y="705.5" text-anchor="middle" font-size="26" font-weight="bold" letter-spacing="-0.6" fill="#000">13,6%</text>
</svg>

<div class="badge" style="left:1464px;top:868px;width:313px;background:#f0739f">Einspeisung in Energiegemeinschaft 257 kWh</div>
<div class="badge" style="left:1515px;top:908px;width:211px;background:#767676">Fremdeinspeisung 1.629 kWh</div>
<div class="badge" style="left:1521px;top:952px;width:199px;background:#f59a00;color:#111;font-weight:normal;letter-spacing:0;-webkit-text-stroke:0.25px #111">Stromerzeugung 1.886 kWh</div>

<!-- alert -->
<div class="abs" style="left:305px;top:880px;width:1038px;height:78px;border:1.3px solid #1d2a40;border-radius:4px"></div>
<svg class="abs" style="left:322px;top:897px" width="24" height="24" viewBox="0 0 24 24"><path d="M12 2C6.48 2 2 6.48 2 12s4.48 10 10 10 10-4.48 10-10S17.52 2 12 2zm1 15h-2v-6h2v6zm0-8h-2V7h2v2z" fill="#16213a"/></svg>
<div class="t" style="left:362px;top:897px;font-size:16px;color:#1d2a40;line-height:22px;white-space:normal;width:1000px">Wenn du einen Zeitraum von wenigen Tagen auswählst, siehst du zeitlich höher aufgelöste Daten. Zusätzlich kannst du ins<br>Diagramm zoomen, indem du einen Bereich markierst.</div>
<svg class="abs" style="left:1308px;top:907px" width="24" height="24" viewBox="0 0 24 24"><path d="M12 2C6.47 2 2 6.47 2 12s4.47 10 10 10 10-4.47 10-10S17.53 2 12 2zm5 13.59L15.59 17 12 13.41 8.41 17 7 15.59 10.59 12 7 8.41 8.41 7 12 10.59 15.59 7 17 8.41 13.41 12 17 15.59z" fill="#16213a"/></svg>
</body></html>
